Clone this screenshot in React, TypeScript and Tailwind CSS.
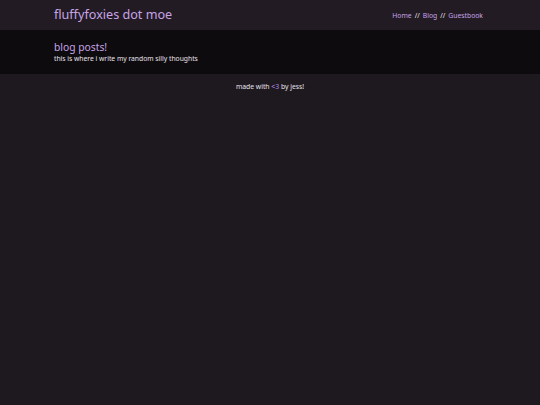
export default function App() {
  return (
    <div className="min-h-[405px] bg-[#1e181f] font-['Noto_Sans',sans-serif] text-[#e8e4ea]">
      {/* Header */}
      <header className="h-[30px] bg-[#221b23]">
        <div className="mx-[54px] flex h-full items-center justify-between">
          <h1 className="text-[12.6px] leading-none text-[#c7a3e6]">fluffyfoxies dot moe</h1>
          <nav className="mr-[3px] mt-[2px] flex items-center gap-[3px] text-[6.8px] text-[#c7a3e6]">
            <a>Home</a>
            <span className="text-[#e8e4ea]">//</span>
            <a>Blog</a>
            <span className="text-[#e8e4ea]">//</span>
            <a>Guestbook</a>
          </nav>
        </div>
      </header>

      {/* Hero */}
      <section className="h-[44px] bg-[#0e0b0f]">
        <div className="mx-[54px] pt-[10px]">
          <h2 className="text-[10.3px] leading-[14px] text-[#c7a3e6]">blog posts!</h2>
          <p className="text-[6.75px] leading-[10px]">this is where i write my random silly thoughts</p>
        </div>
      </section>

      {/* Footer */}
      <footer className="pt-[8px] text-center text-[6.8px]">
        made with <span className="text-[#b68ae0]">&lt;3</span> by jess!
      </footer>
    </div>
  );
}
